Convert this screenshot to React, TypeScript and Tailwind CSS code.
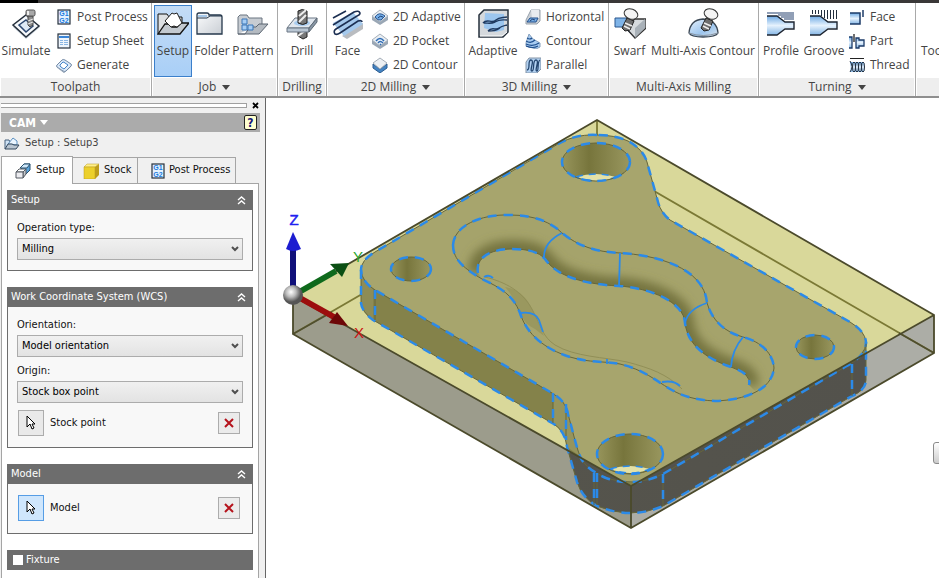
import type { ReactNode } from 'react'

const INK = '#26303c'
const BLUE = '#2b8ae8'

/* ---------- ribbon icons, 32px ---------- */

const SimulateIcon = () => (
  <>
    <path d="M16 9 30 19 16 31 3 19Z" fill="#c9d2dc" />
    <path d="M16 7 29 18 16 29 3 17Z" fill="#f6f9fc" stroke={INK} strokeWidth="1.5" />
    <path d="M16 12 23 18 16 24 9 17Z" fill="#dfeaf6" stroke="#2c4770" strokeWidth="1.5" />
    <path d="M18 8h5v9l-3 2-2-2z" fill="#8d8d8d" stroke="#444" />
    <path d="m18 13 5-2m-5 5 5-2" stroke="#eee" />
    <rect x="16" y="2" width="9" height="6" rx="1.5" fill="#a8a8a8" stroke="#555" />
    <path d="M18 3v4" stroke="#eee" strokeWidth="2" />
  </>
)

const SetupIcon = () => (
  <>
    <path d="M1 26V6h9l2 3h13v7" fill="#dde0e3" stroke="#111" />
    <path d="m1 26 7-10h4l3 3h5l4-4h8l-9 11z" fill="#c3c9cf" stroke="#111" strokeWidth="1.3" />
    <path d="M8 13 15 5l2 1 3-1 5 10-5 4-3-1-3 1z" fill="#fff" stroke="#222" />
  </>
)

const FolderIcon = () => (
  <>
    <path d="M1 7q0-2 2-2h8q2 0 2 2h11q2 0 2 2v17H1z" fill="url(#folder)" stroke="#26384c" strokeWidth="1.3" />
    <path d="M1 10h10l3-2h12" fill="none" stroke="#26384c" />
    <path d="M2 7h9v2H2z" fill="#a8c9ea" />
  </>
)

const PatternIcon = () => (
  <>
    <path d="M1 26V9l2-2h7l2 3h13v6" fill="#c7ccd2" stroke="#6b7580" />
    <path d="M1 26h21l9-10h-9l-3 3h-6l-5 7z" fill="#b4bac1" stroke="#5b6571" />
    <path d="M5 11h5v5H5zM5 17h5v5H5zM11 17h5v5h-5z" fill="#a6cdf4" stroke="#3b76b8" />
  </>
)

const DrillIcon = () => (
  <>
    <path d="M12 22h9v7l-4 2-5-3z" fill="#777" stroke="#222" />
    <path d="m12 28 8-6" stroke="#eee" strokeWidth="2" />
    <path d="M9 10h22l-8 10H1z" fill="#e1e7ee" stroke="#6b7784" />
    <path d="M1 20h22v4H1z" fill="#b9c6d3" stroke="#6b7784" />
    <path d="m23 20 8-10v4l-8 10z" fill="#8997a5" stroke="#5d6975" />
    <ellipse cx="16" cy="15" rx="8" ry="3" fill="#a9cdf0" />
    <path d="M12 3q4-3 9 0v12q-4 3-9 0z" fill="#777" stroke="#222" />
    <path d="m13 8 7-6m-7 12 7-7" stroke="#eee" strokeWidth="2" />
  </>
)

const FaceMillIcon = () => (
  <>
    <path d="M10 28 31 15v6L15 31z" fill="#b9bcc0" />
    <path d="M1 15 21 4 31 16 12 28Z" fill="#a5c9ec" />
    <path
      d="M1 10 14 3M1 17 22 4q5-2 6 1 0 2-3 3L4 21q-3 2-1 5 2 1 5-1L26 13q4-1 4 1"
      fill="none"
      stroke="#1c2f52"
      strokeWidth="1.6"
    />
  </>
)

const AdaptiveIcon = () => (
  <>
    <path d="M2 7 7 2h24v22l-5 5H2z" fill="#d5d9dd" stroke={INK} strokeWidth="1.5" />
    <path d="m8 5 19 1v16l-8 2-12-4z" fill="#9cc6ef" />
    <path d="M3 28h22l5-4" fill="none" stroke="#fff" />
    <path
      d="M6 15c4-5 9 1 13-3 3-3 6-2 11-3M7 15c5 0 7 1 11-1 5-3 7-2 12-2M11 23c4-5 8 0 11-3 3-2 4-2 8-3M11 23c5 0 8 0 12-3"
      fill="none"
      stroke="#1f3a60"
      strokeWidth="1.4"
    />
  </>
)

const SwarfIcon = () => (
  <>
    <path d="M1 10h12l8 10v10L10 19H1z" fill="#7fb4e8" stroke="#2b578e" />
    <path d="M11 19 21 11h11v9L21 30Z" fill="#d6dadd" stroke="#333" strokeWidth="1.3" />
    <path d="m21 20 10-9v9L21 30z" fill="#a9b1b8" />
    <path d="m13 10 7 3-4 9-5 1-3-3z" fill="#6e6e6e" stroke="#222" />
    <path d="m11 15 7 3m-8 0 6 3" stroke="#eee" strokeWidth="1.5" />
    <ellipse cx="17" cy="6" rx="7" ry="5" transform="rotate(20 17 6)" fill="#f4f4f4" stroke="#333" />
  </>
)

const MultiAxisIcon = () => (
  <>
    <path d="M2 25q1-13 14-14 14 1 15 14-2 4-15 4-12 0-14-4z" fill="url(#dome)" stroke="#3a4653" strokeWidth="1.3" />
    <path d="M2 25q14 5 29 0" fill="none" stroke="#8592a0" />
    <path d="m19 10 7 3-4 9-5 1-3-3z" fill="#6e6e6e" stroke="#222" />
    <path d="m17 15 7 3m-8 0 6 3" stroke="#eee" strokeWidth="1.5" />
    <ellipse cx="24" cy="6" rx="7" ry="5" transform="rotate(20 24 6)" fill="#f4f4f4" stroke="#333" />
  </>
)

const ProfileIcon = () => (
  <>
    <path d="M2 8h10l8 6h9v6h-9l-8 7H2z" fill="url(#steel)" />
    <path d="M2 8h10l8 6h9v7h-9l-8 6H2" fill="none" stroke="#1d2430" strokeWidth="1.4" />
    <path d="M2 5h27M13 7h16M16 9h13M19 11h10" stroke="#24406e" strokeWidth="1.2" />
  </>
)

const GrooveIcon = () => (
  <>
    <path d="M2 8h10l8 6h9v6h-9l-8 7H2z" fill="url(#steel)" />
    <path d="M2 8h10l8 6h9v7h-9l-8 6H2" fill="none" stroke="#1d2430" strokeWidth="1.4" />
    <path d="M4.500 2v4M7.500 2v4M10.500 2v4M13.500 2v6M16.500 2v8M19.500 2v9M22.500 2v9M25.500 2v9M28.500 2v9" stroke="#222e3d" />
  </>
)

/* ---------- ribbon icons, 16px ---------- */

const PostIcon = () => (
  <>
    <rect x="2" y="1" width="12" height="14" fill="#e4f1fd" stroke="#26303c" strokeWidth="1.2" />
    <g fill="#1a7be0" fontFamily="Liberation Sans, sans-serif" fontSize="7" fontWeight="bold" textAnchor="middle">
      <text x="8" y="7">G1</text>
      <text x="8" y="14">G2</text>
    </g>
  </>
)

const SheetIcon = () => (
  <>
    <rect x="2" y="1" width="12" height="14" fill="#eef5fc" stroke="#26303c" strokeWidth="1.2" />
    <path d="M3 3h10v2H3z" fill="#3b86d8" />
    <path d="M4 7.500h3m1 0h4M4 9.500h3m1 0h4M4 11.500h3m1 0h4" stroke="#8ab6e4" />
  </>
)

const GenerateIcon = () => (
  <>
    <path d="m0 10 8 5 8-6-8 7z" fill="#8697aa" />
    <path d="M1 8 6 3q1-1 3 0l6 4q1 1 0 2l-5 5q-1 1-3 0L1 10q-1-1 0-2z" fill="#dbe9f8" stroke="#7389a5" />
    <path d="M4 8 7 5q1 0 2 1l3 2-4 4q-2-1-4-3z" fill="#fff" stroke="#4482c8" />
  </>
)

const Adaptive2DIcon = () => (
  <>
    <path d="M0 7v4l8 5 8-5V7z" fill="#9aa7b5" />
    <path d="m8 1 8 6-8 6-8-6z" fill="#e9eef3" stroke="#a5afba" />
    <path d="M3 8q4-6 10-1l-4 4q-3 1-6-3z" fill="#73aee9" stroke="#2a5691" />
    <path d="M6 9q2-3 5-1" fill="none" stroke="#1f3f70" />
  </>
)

const Pocket2DIcon = () => (
  <>
    <path d="M0 7v4l8 5 8-5V7z" fill="#9aa7b5" />
    <path d="m8 1 8 6-8 6-8-6z" fill="#e9eef3" stroke="#a5afba" />
    <path d="M4 8q4-5 8 0M6 10q2-3 5 0M8 11l1 1" fill="none" stroke="#2d6cb6" strokeWidth="1.5" />
  </>
)

const Contour2DIcon = () => (
  <>
    <path d="m1 7 7 5 7-5v4l-7 5-7-5z" fill="#4383c2" stroke="#2d5d90" />
    <path d="m8 1 7 5-7 6-7-6z" fill="#edf0f3" stroke="#a5aeb8" />
  </>
)

const HorizontalIcon = () => (
  <>
    <path d="M1 11 6 1h9v11l-3 3H1z" fill="#ccd1d6" stroke="#98a1ab" />
    <path d="M6 1h8v8H7z" fill="#e9ecef" />
    <path d="m2 13 3-4h8l-2 4z" fill="#78aee6" stroke="#24508a" />
    <path d="M5 12q2-3 5-1" fill="none" stroke="#1f3f70" />
  </>
)

const Contour3DIcon = () => (
  <>
    <path d="m1 10 3-9 4 5 7 4v4l-4 2-10-3z" fill="#a9cdf2" stroke="#86a0bd" />
    <path d="M2 5q3 2 5 0M1 8q5 3 9-1M1 11q7 3 13-1M1 13q7 3 12 0" fill="none" stroke="#1e4f8e" strokeWidth="1.2" />
  </>
)

const ParallelIcon = () => (
  <>
    <path d="m1 5 3-4h12v11l-4 4H1z" fill="#b2d1f1" stroke="#8494a6" />
    <path
      d="M2 13c4 0 0-10 4-10s-2 11 1 11 0-11 4-11-2 11 1 11c2 0 0-10 3-11"
      fill="none"
      stroke="#24466f"
      strokeWidth="1.3"
    />
  </>
)

const TurnFaceIcon = () => (
  <>
    <path d="M1 4h10v11H1z" fill="url(#steel)" />
    <path d="M1 4h10v11H1" fill="none" stroke="#1d3b68" strokeWidth="1.5" />
    <path d="M14 1v7" stroke="#1d3b68" strokeWidth="1.5" />
  </>
)

const PartIcon = () => (
  <>
    <path d="M0 4h3v11H0M7 5h3v2h5v6h-5v2H7z" fill="url(#steel)" stroke="#1d3b68" strokeWidth="1.3" />
    <path d="M5 1v8" stroke="#222" strokeWidth="1.3" />
  </>
)

const ThreadIcon = () => (
  <>
    <path d="M1 1.500h14" stroke="#222" />
    <path d="M1 5h14v10H1z" fill="url(#steel)" />
    <g fill="none" stroke="#222e3d">
      <path d="M1 4q4 6 0 11" />
      <ellipse cx="5" cy="10" rx="1.500" ry="5" />
      <ellipse cx="8" cy="10" rx="1.500" ry="5" />
      <ellipse cx="11" cy="10" rx="1.500" ry="5" />
      <ellipse cx="14" cy="10" rx="1.500" ry="5" />
    </g>
  </>
)

function Icon({ size = 'lg', children }: { size?: 'lg' | 'sm'; children: ReactNode }) {
  return size === 'lg' ? (
    <svg viewBox="0 0 32 32" className="size-8 shrink-0" aria-hidden="true">{children}</svg>
  ) : (
    <svg viewBox="0 0 16 16" className="size-4 shrink-0" aria-hidden="true">{children}</svg>
  )
}

/* ---------- ribbon ---------- */

type Tool = { label: string; icon: ReactNode; width?: string; active?: boolean }
type Group = { title: string; width: string; menu?: boolean; big: Tool[]; small?: Tool[] }

const groups: Group[] = [
  {
    title: 'Toolpath',
    width: 'w-[152px]',
    big: [{ label: 'Simulate', icon: <SimulateIcon />, width: 'w-[52px]' }],
    small: [
      { label: 'Post Process', icon: <PostIcon /> },
      { label: 'Setup Sheet', icon: <SheetIcon /> },
      { label: 'Generate', icon: <GenerateIcon /> },
    ],
  },
  {
    title: 'Job',
    width: 'w-[126px]',
    menu: true,
    big: [
      { label: 'Setup', icon: <SetupIcon />, width: 'w-[38px] ml-[2px]', active: true },
      { label: 'Folder', icon: <FolderIcon />, width: 'w-[40px]' },
      { label: 'Pattern', icon: <PatternIcon />, width: 'w-[42px]' },
    ],
  },
  { title: 'Drilling', width: 'w-[49px]', big: [{ label: 'Drill', icon: <DrillIcon />, width: 'w-[48px]' }] },
  {
    title: '2D Milling',
    width: 'w-[138px]',
    menu: true,
    big: [{ label: 'Face', icon: <FaceMillIcon />, width: 'w-[41px]' }],
    small: [
      { label: '2D Adaptive', icon: <Adaptive2DIcon /> },
      { label: '2D Pocket', icon: <Pocket2DIcon /> },
      { label: '2D Contour', icon: <Contour2DIcon /> },
    ],
  },
  {
    title: '3D Milling',
    width: 'w-[144px]',
    menu: true,
    big: [{ label: 'Adaptive', icon: <AdaptiveIcon />, width: 'w-[56px]' }],
    small: [
      { label: 'Horizontal', icon: <HorizontalIcon /> },
      { label: 'Contour', icon: <Contour3DIcon /> },
      { label: 'Parallel', icon: <ParallelIcon /> },
    ],
  },
  {
    title: 'Multi-Axis Milling',
    width: 'w-[150px]',
    big: [
      { label: 'Swarf', icon: <SwarfIcon />, width: 'w-[41px]' },
      { label: 'Multi-Axis Contour', icon: <MultiAxisIcon />, width: 'w-[106px]' },
    ],
  },
  {
    title: 'Turning',
    width: 'w-[157px]',
    menu: true,
    big: [
      { label: 'Profile', icon: <ProfileIcon />, width: 'w-[44px]' },
      { label: 'Groove', icon: <GrooveIcon />, width: 'w-[42px]' },
    ],
    small: [
      { label: 'Face', icon: <TurnFaceIcon /> },
      { label: 'Part', icon: <PartIcon /> },
      { label: 'Thread', icon: <ThreadIcon /> },
    ],
  },
]

function RibbonGroup({ group }: { group: Group }) {
  return (
    <section className={`flex shrink-0 flex-col border-r border-[#a9a9a9] ${group.width}`}>
      <div className="flex flex-1 bg-white pt-[2px]">
        {group.big.map((tool) => (
          <button
            key={tool.label}
            className={`flex h-[72px] shrink-0 flex-col items-center border pt-[2px] whitespace-nowrap ${tool.width} ${
              tool.active ? 'border-[#3b7fcb] bg-linear-to-b from-[#c4dcf6] to-[#a9cff7]' : 'border-transparent'
            }`}
          >
            <Icon>{tool.icon}</Icon>
            <span className="mt-[3px] leading-4">{tool.label}</span>
          </button>
        ))}
        {group.small && (
          <div className="ml-1 flex flex-col">
            {group.small.map((tool) => (
              <button key={tool.label} className="flex h-6 items-center gap-[5px] whitespace-nowrap">
                <Icon size="sm">{tool.icon}</Icon>
                {tool.label}
              </button>
            ))}
          </div>
        )}
      </div>
      <h2 className="flex h-[18px] items-center justify-center gap-[6px] border-x border-white bg-[#eeeeee] whitespace-nowrap">
        {group.title}
        {group.menu && <DownArrow />}
      </h2>
    </section>
  )
}

const DownArrow = () => (
  <svg viewBox="0 0 8 5" className="h-[5px] w-2 shrink-0" aria-hidden="true">
    <path d="M0 0h8L4 5z" fill="currentColor" />
  </svg>
)

function Ribbon() {
  return (
    <header className="shrink-0 border-b-2 border-[#8f8f8f] font-['Open_Sans',sans-serif] text-[12px] text-[#444444]">
      <div className="flex h-[3px] bg-[#3a3838]">
        <div className="w-[38px] bg-black" />
      </div>
      <div className="flex h-[93px] overflow-hidden">
        {groups.map((group) => (
          <RibbonGroup key={group.title} group={group} />
        ))}
        <section className="flex flex-1 flex-col overflow-hidden">
          <div className="flex-1 bg-white pt-[2px] pl-[5px]">
            <button className="pt-[38px] leading-4 whitespace-nowrap">Tool</button>
          </div>
          <div className="h-[18px] border-l border-white bg-[#eeeeee]" />
        </section>
      </div>
    </header>
  )
}

/* ---------- property panel ---------- */

function Section({ title, children }: { title: string; children: ReactNode }) {
  return (
    <section className="mb-4 border border-[#6d6d6d] bg-[#f8f8f8]">
      <div className="flex h-[19px] items-center justify-between bg-[#6d6d6d] pr-[6px] pl-[3px] text-white">
        <h3>{title}</h3>
        <button aria-label={`Collapse ${title}`}>
          <svg viewBox="0 0 9 9" className="size-[9px]" fill="none" stroke="#fff" strokeWidth="1.4">
            <path d="m1 4 3.500-3L8 4M1 8l3.500-3L8 8" />
          </svg>
        </button>
      </div>
      <div className="px-[9px]">{children}</div>
    </section>
  )
}

function SelectField({ id, label, options }: { id: string; label: string; options: string[] }) {
  return (
    <div className="pt-[10px]">
      <label htmlFor={id} className="block h-[18px] leading-4">{label}</label>
      <div className="relative">
        <select
          id={id}
          className="block h-[22px] w-full appearance-none border border-[#acacac] bg-linear-to-b from-[#f0f0f0] to-[#e3e3e3] pl-1 text-black"
        >
          {options.map((option) => (
            <option key={option}>{option}</option>
          ))}
        </select>
        <svg viewBox="0 0 8 6" className="pointer-events-none absolute top-2 right-1 h-[6px] w-2" aria-hidden="true">
          <path d="m1 1 3 3 3-3" fill="none" stroke="#4f4f4f" strokeWidth="2" />
        </svg>
      </div>
    </div>
  )
}

function Picker({ label, active }: { label: string; active?: boolean }) {
  return (
    <div className="flex items-center px-[1px]">
      <button
        aria-label={`Select ${label}`}
        className={`flex size-[26px] items-center justify-center border ${
          active ? 'border-[#569de5] bg-[#cfe6fc]' : 'border-[#acacac] bg-[#e9e9e9]'
        }`}
      >
        <svg viewBox="0 0 10 16" className="h-4 w-[10px]">
          <path d="M1 1v11l3-3 2 5 2-1-2-4h3z" fill="#fff" stroke="#000" />
        </svg>
      </button>
      <span className="ml-[6px] flex-1">{label}</span>
      <button
        aria-label={`Clear ${label}`}
        className="mr-[2px] flex size-[22px] items-center justify-center border border-[#acacac] bg-[#ebebeb]"
      >
        <svg viewBox="0 0 10 10" className="size-[10px]">
          <path d="m1 1 8 8M9 1 1 9" stroke="#b5121b" strokeWidth="2" />
        </svg>
      </button>
    </div>
  )
}

function Tabs() {
  return (
    <div role="tablist" className="flex h-7 items-end">
      <button
        role="tab"
        aria-selected="true"
        className="relative z-10 -mb-px flex h-7 w-[72px] items-center gap-[5px] border border-b-0 border-[#a5a5a5] bg-white pl-[13px]"
      >
        <svg viewBox="0 0 16 16" className="size-4" strokeLinejoin="round" aria-hidden="true">
          <path d="M6 5 9 1h6v6l-4 4z" fill="#5ba4dc" stroke="#28506e" />
          <path d="m5 5 4-4h6l-3 4z" fill="#cfe8fa" stroke="#28506e" />
          <path d="m1 9 3-3h7L8 9z" fill="#fff" stroke="#555b62" />
          <path d="m8 9 3-3v5l-3 4z" fill="#c4c7cc" stroke="#555b62" />
          <path d="M1 9h7v6H1z" fill="#ececf0" stroke="#555b62" />
        </svg>
        Setup
      </button>
      <button
        role="tab"
        aria-selected="false"
        className="flex h-[26px] w-[65px] items-center gap-[5px] border-t border-r border-[#a5a5a5] pl-[10px]"
      >
        <svg viewBox="0 0 16 16" className="size-4" aria-hidden="true">
          <path d="m1 4 3-3h12l-4 3z" fill="#fff08a" stroke="#b89a1c" strokeWidth=".5" />
          <path d="M1 4h11v12H1z" fill="#ecd02c" stroke="#b89a1c" strokeWidth=".5" />
          <path d="m12 4 4-3v11l-4 4z" fill="#bd9d1c" />
        </svg>
        Stock
      </button>
      <button
        role="tab"
        aria-selected="false"
        className="flex h-[26px] w-[98px] items-center gap-[3px] border-t border-r border-[#a5a5a5] pl-3 whitespace-nowrap"
      >
        <Icon size="sm"><PostIcon /></Icon>
        Post Process
      </button>
    </div>
  )
}

function PropertyPanel() {
  return (
    <aside className="flex w-[266px] shrink-0 flex-col border-r border-[#666666] bg-[#f0f0f0] pr-[5px] pl-px font-['DejaVu_Sans_Condensed','DejaVu_Sans',sans-serif] text-[11px] text-[#111111]">
      <div className="flex h-[15px] shrink-0 items-center gap-1">
        <div className="h-[5px] flex-1 border border-l-0 border-[#a0a0a0] bg-white" />
        <button aria-label="Close" className="p-[1px]">
          <svg viewBox="0 0 7 7" className="size-[7px]"><path d="m1 1 5 5M6 1 1 6" stroke="#000" strokeWidth="1.8" /></svg>
        </button>
      </div>
      <div className="flex h-[19px] shrink-0 items-center justify-between bg-[#ababab] pr-[3px] pl-2 text-white">
        <button className="flex items-center gap-1 text-[12px] font-bold">
          CAM
          <DownArrow />
        </button>
        <button aria-label="Help" className="flex h-[15px] w-[13px] items-center justify-center rounded-[2px] border border-[#222] bg-[#ffffd0] text-[12px] leading-3 font-bold text-[#14147a]">
          ?
        </button>
      </div>
      <div className="flex h-[23px] shrink-0 items-center gap-[5px] pl-[3px] text-[#444]">
        <svg viewBox="0 0 16 14" className="h-[14px] w-4" aria-hidden="true">
          <path d="M1 12V3h4l1 2" fill="#cfe2f4" stroke="#47617c" />
          <path d="m4 7 5-6 4 3v4z" fill="#eaf5ff" stroke="#5b8fc0" />
          <path d="m1 12 3-5h4l2 1h5l-3 4z" fill="#b9c5d1" stroke="#34485d" />
        </svg>
        Setup : Setup3
      </div>
      <Tabs />
      <div className="mr-[1px] flex-1 border border-b-0 border-[#a5a5a5] bg-white px-[5px] pt-[6px]">
        <Section title="Setup">
          <div className="pb-[10px]">
            <SelectField id="operation" label="Operation type:" options={['Milling', 'Turning']} />
          </div>
        </Section>
        <Section title="Work Coordinate System (WCS)">
          <SelectField id="orientation" label="Orientation:" options={['Model orientation']} />
          <div className="-mt-1">
            <SelectField id="origin" label="Origin:" options={['Stock box point']} />
          </div>
          <div className="pt-[7px] pb-[11px]">
            <Picker label="Stock point" />
          </div>
        </Section>
        <Section title="Model">
          <div className="pt-[11px] pb-3">
            <Picker label="Model" active />
          </div>
        </Section>
        <div className="flex h-5 items-center bg-[#6d6d6d] pl-[6px] text-white">
          <input id="fixture" type="checkbox" className="size-[10px] appearance-none bg-white" />
          <label htmlFor="fixture" className="ml-[3px]">Fixture</label>
        </div>
      </div>
    </aside>
  )
}

/* ---------- 3D view ---------- */

const partTop =
  'M597 135C580 134 565 139 553 147L375 252Q361 260 361 270Q362 282 375 290L552 393Q566 401 568 414C573 432 576 446 580 456Q584 468 606 478Q635 488 663 474L845 367Q866 356 866 342Q865 331 850 322L670 220Q661 213 658 202L647 162Q643 149 628 141Q615 135 597 135Z'
const partSilhouette =
  'M361 270V303Q362 312 373 320L552 423Q565 430 567 447L577 482Q582 498 597 506Q631 520 663 506L852 396Q866 390 866 380V342L597 200Z'
const partBottom = 'M361 270V303Q362 312 373 320L552 423Q565 430 567 447L577 482Q582 498 597 506Q631 520 663 506L852 396Q866 390 866 380V342'
const grooveOuter =
  'M453 245C454 226 480 214 510 215C535 215 552 223 562 233C578 246 596 252 620 253C655 255 704 267 707 303C712 320 724 332 743 337C762 342 773 354 774 368C772 390 745 400 715 401C695 400 682 396 670 389C655 380 644 370 620 364C605 361 590 363 570 357C545 349 527 335 520 313C513 295 501 288 482 279C465 269 453 260 453 245Z'
const grooveInner =
  'M478 273C475 258 490 249 512 249C528 249 539 252 545 259C556 275 580 284 619 286C650 288 684 302 685 323C688 345 705 358 731 367Q752 374 749 385'
const channel =
  'M482 279C465 269 453 260 453 245C454 226 480 214 510 215C535 215 552 223 562 233C578 246 596 252 620 253C655 255 704 267 707 303C712 320 724 332 743 337C762 342 773 354 774 368Q772 382 755 391L749 385Q752 374 731 367C705 358 688 345 685 323C684 302 650 288 619 286C580 284 556 275 545 259C539 252 528 249 512 249C490 249 475 258 478 273Z'
const lowerWall = 'M485 277C505 282 523 291 533 311C541 327 543 337 555 345C575 357 604 357 627 362C650 368 667 374 682 389'
const crossEdges = 'M562 233Q544 242 544 257M620 253 619 286M707 303Q688 309 685 323M743 337Q732 350 731 367M520 313Q535 311 539 320L543 332M484 277Q489 274 493 278M607 359V364M662 382Q674 380 680 386'
const holes = [
  { cx: 596, cy: 162, rx: 34, ry: 19, big: true },
  { cx: 630, cy: 454, rx: 33, ry: 20, big: true },
  { cx: 411, cy: 269, rx: 20, ry: 12, big: false },
  { cx: 815, cy: 347, rx: 19, ry: 12, big: false },
]

function Edge({ d }: { d: string }) {
  return (
    <g fill="none">
      <path d={d} stroke="#65663c" />
      <path d={d} stroke={BLUE} strokeWidth="2.5" strokeDasharray="9 7" />
    </g>
  )
}

function ModelView() {
  return (
    <main className="relative min-w-0 flex-1 overflow-hidden bg-white">
      <svg viewBox="266 98 673 480" className="block h-full w-full" role="img" aria-label="Model in stock">
        <defs>
          <clipPath id="below"><path d="M293 296 631 486 934 315V578H293Z" /></clipPath>
          <clipPath id="channel"><path d={channel} /></clipPath>
          <linearGradient id="bore">
            <stop offset="0" stopColor="#97955c" />
            <stop offset=".4" stopColor="#77753c" />
            <stop offset="1" stopColor="#99975f" />
          </linearGradient>
          <linearGradient id="front">
            <stop offset="0" stopColor="#4b4a42" />
            <stop offset=".15" stopColor="#44433d" />
            <stop offset=".35" stopColor="#55544c" />
            <stop offset="1" stopColor="#53524c" />
          </linearGradient>
          <radialGradient id="ball" cx=".4" cy=".35">
            <stop offset="0" stopColor="#fff" />
            <stop offset=".5" stopColor="#bbb" />
            <stop offset="1" stopColor="#555" />
          </radialGradient>
          <filter id="soft" x="-20%" y="-20%" width="140%" height="140%"><feGaussianBlur stdDeviation="5" /></filter>
        </defs>

        {/* stock */}
        <path d="M597 120 934 315 631 486 293 296Z" fill="#d9d89a" />
        <path d="M293 296 631 486V528L293 334Z" fill="#9c9c8c" />
        <path d="M631 486 934 315V353L631 528Z" fill="#acada6" />
        <path d="M293 334 597 158 934 353M597 120V158" fill="none" stroke="#7b7935" strokeWidth="1.8" />
        <path d="M293 334 332 312M899 333 934 353" stroke="#4f4e30" strokeWidth="1.5" />

        {/* part */}
        <path d={partSilhouette} fill="#84824a" />
        <path d="M361 270V303Q362 312 373 320V289Z" fill="#8e8c56" />
        <path d="M553 393V423Q565 430 567 447L580 456 568 412Q564 398 553 393Z" fill="#96945d" />
        <path d={partTop} fill="#a7a56d" />
        <g clipPath="url(#below)">
          <path d={partSilhouette} fill="url(#front)" />
        </g>

        {/* groove, darkest along its inner wall */}
        <g clipPath="url(#channel)">
          <path d={channel} fill="#a5a36b" />
          <path d={grooveInner} fill="none" stroke="#76743f" strokeWidth="18" filter="url(#soft)" />
        </g>
        <path d="M505 287Q524 290 533 311L544 336 535 329Q524 324 520 313 514 297 505 287Z" fill="#9a985f" />
        <path d={lowerWall} fill="none" stroke="#918f57" />

        {holes.map((hole) => (
          <g key={hole.cx}>
            <ellipse cx={hole.cx} cy={hole.cy} rx={hole.rx} ry={hole.ry} fill="url(#bore)" />
            {hole.big && (
              <path
                d={`M${hole.cx - 20} ${hole.cy + 15}q20 -6 40 0q-20 8 -40 0z`}
                fill="#e3e1a8"
                stroke={BLUE}
                strokeWidth="1.5"
                strokeDasharray="7 6"
              />
            )}
            <ellipse cx={hole.cx} cy={hole.cy} rx={hole.rx} ry={hole.ry} fill="none" stroke="#65663c" />
            <ellipse
              cx={hole.cx}
              cy={hole.cy}
              rx={hole.rx}
              ry={hole.ry}
              fill="none"
              stroke={BLUE}
              strokeWidth="2.5"
              strokeDasharray="9 7"
            />
          </g>
        ))}

        <Edge d={grooveOuter} />
        <Edge d={grooveInner} />
        <path d={crossEdges} fill="none" stroke={BLUE} strokeWidth="1.8" />
        <Edge d={partTop} />
        <Edge d={partBottom} />
        <Edge d="M375 290V320M553 393V423M566 404V440M594 473V505M597 473V505M663 474V506M852 364V396" />

        {/* stock edges */}
        <path
          d="M597 120 934 315V353L631 528 293 334V296ZM293 296 631 486 934 315M631 486V528"
          fill="none"
          stroke="#4b4a2b"
          strokeWidth="1.8"
        />

        {/* origin triad */}
        <g strokeLinecap="butt">
          <path d="M293 286V248" stroke="#10107a" strokeWidth="6" />
          <path d="M293 232 301 249Q293 253 286 249Z" fill="#1c1cd0" />
          <path d="M301 291 336 271" stroke="#0f6a1c" strokeWidth="6" />
          <path d="M349 263 330 264 342 277Z" fill="#0b4f13" />
          <path d="M300 298 334 317" stroke="#9c0d0d" strokeWidth="6" />
          <path d="M348 326 337 312 329 323Z" fill="#6d0707" />
          <circle cx="293" cy="295" r="10" fill="url(#ball)" />
        </g>
        <g fontFamily="Liberation Sans, sans-serif" fontSize="15" textAnchor="middle">
          <text x="294" y="225" fill="#2020f0" stroke="#2020f0" strokeWidth=".5">Z</text>
          <text x="358" y="262" fill="#2da52d">Y</text>
          <text x="359" y="338" fill="#cc1111">X</text>
        </g>
      </svg>
      <button
        aria-label="Navigation bar"
        className="absolute top-[344px] -right-2 h-[22px] w-[14px] rounded-[3px] border border-[#8a8a8a] bg-linear-to-b from-white to-[#cccccc]"
      />
    </main>
  )
}

export default function App() {
  return (
    <div className="flex h-screen flex-col overflow-hidden bg-[#f0f0f0]">
      <svg className="absolute size-0" aria-hidden="true">
        <defs>
          <linearGradient id="steel" x1="0" y1="0" x2="0" y2="1">
            <stop offset="0" stopColor="#6faae4" />
            <stop offset=".5" stopColor="#e6f2fd" />
            <stop offset="1" stopColor="#86b7e6" />
          </linearGradient>
          <linearGradient id="folder" x1="0" y1="0" x2="1" y2="1">
            <stop offset="0" stopColor="#fbfcfd" />
            <stop offset="1" stopColor="#c9ced4" />
          </linearGradient>
          <linearGradient id="dome" x1="0" y1="0" x2="1" y2="1">
            <stop offset="0" stopColor="#e8f2fc" />
            <stop offset=".6" stopColor="#9cc5ee" />
            <stop offset="1" stopColor="#dfe5ea" />
          </linearGradient>
        </defs>
      </svg>
      <Ribbon />
      <div className="flex min-h-0 flex-1">
        <PropertyPanel />
        <ModelView />
      </div>
    </div>
  )
}
